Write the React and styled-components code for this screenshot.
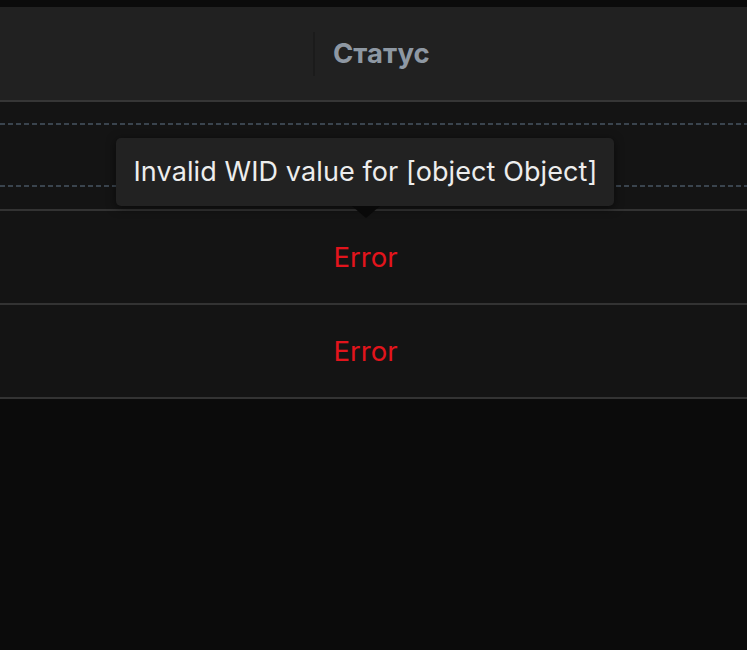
import React from 'react'
import styled, { createGlobalStyle } from 'styled-components'

const GlobalStyle = createGlobalStyle`
  html, body {
    margin: 0;
    padding: 0;
    background: #0b0b0b;
  }
  body {
    font-family: Inter, 'Liberation Sans', sans-serif;
  }
`

const Page = styled.div`
  width: 747px;
  height: 650px;
  padding-top: 7px;
  box-sizing: border-box;
  background: #0b0b0b;
  overflow: hidden;
`

const Header = styled.div`
  height: 95px;
  background: #212121;
  border-bottom: 2px solid #363636;
  display: flex;
  align-items: center;
  box-sizing: border-box;
`

const HeaderCell = styled.div`
  flex: ${p => (p.grow ? 1 : 'none')};
  width: ${p => (p.grow ? 'auto' : '313px')};
  height: 44px;
  display: flex;
  align-items: center;
  padding-left: 18px;
  padding-bottom: 2px;
  border-left: ${p => (p.divided ? '2px solid #1b1b1b' : 'none')};
  color: #8e98a3;
  font-size: 27.5px;
  font-weight: 700;
  box-sizing: border-box;
`

const Row = styled.div`
  position: relative;
  height: ${p => p.h}px;
  background: #141414;
  border-bottom: 2px solid #333;
  display: flex;
  align-items: ${p => (p.top ? 'flex-start' : 'center')};
  justify-content: center;
  padding-top: ${p => (p.top ? '21px' : '0')};
  padding-right: ${p => (p.top ? '0' : '16px')};
  box-sizing: border-box;
`

const DashedBox = styled.div`
  width: 100%;
  height: 64px;
  background-image:
    repeating-linear-gradient(90deg, #3a444e 0 5px, transparent 5px 8px),
    repeating-linear-gradient(90deg, #3a444e 0 5px, transparent 5px 8px);
  background-size: 100% 2px, 100% 2px;
  background-position: 0 0, 0 100%;
  background-repeat: no-repeat;
`

const ErrorText = styled.span`
  color: #e3141c;
  font-size: 27.5px;
`

const Tooltip = styled.div`
  position: absolute;
  left: 116px;
  top: 36px;
  width: 498px;
  height: 68px;
  background: #222;
  border-radius: 5px;
  box-shadow: 0 2px 10px rgba(0, 0, 0, 0.55);
  display: flex;
  align-items: center;
  justify-content: center;
  padding-left: 1px;
  padding-bottom: 2px;
  box-sizing: border-box;
  color: #ededed;
  font-size: 27px;
  letter-spacing: 0.1px;
  z-index: 2;

  &::after {
    content: '';
    position: absolute;
    left: 236px;
    bottom: -12px;
    border-left: 14px solid transparent;
    border-right: 14px solid transparent;
    border-top: 12px solid #090909;
  }
`

export default function App() {
  return (
    <Page>
      <GlobalStyle />
      <Header>
        <HeaderCell />
        <HeaderCell grow divided>Статус</HeaderCell>
      </Header>
      <Row h={109} top>
        <DashedBox />
        <Tooltip>Invalid WID value for [object Object]</Tooltip>
      </Row>
      <Row h={94}>
        <ErrorText>Error</ErrorText>
      </Row>
      <Row h={94}>
        <ErrorText>Error</ErrorText>
      </Row>
    </Page>
  )
}
